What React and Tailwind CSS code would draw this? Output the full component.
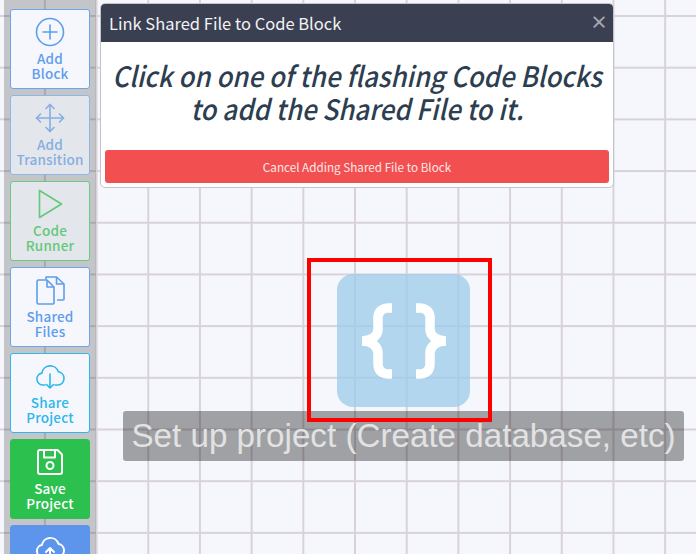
import React from 'react';

const IconPlus = () => (
  <svg width="30" height="30" viewBox="0 0 30 30" fill="none" stroke="currentColor" strokeWidth="1.6" strokeLinecap="round">
    <circle cx="15" cy="15" r="13.5" />
    <path d="M15 8v14M8 15h14" />
  </svg>
);

const IconMove = () => (
  <svg width="30" height="30" viewBox="0 0 30 30" fill="none" stroke="currentColor" strokeWidth="1.6" strokeLinecap="round" strokeLinejoin="round">
    <path d="M15 1.5v27M1.5 15h27" />
    <path d="M11 5.5l4-4 4 4M11 24.5l4 4 4-4M5.5 11l-4 4 4 4M24.5 11l4 4-4 4" />
  </svg>
);

const IconPlay = () => (
  <svg width="30" height="30" viewBox="0 0 30 30" fill="none" stroke="currentColor" strokeWidth="1.6" strokeLinejoin="round">
    <path d="M4.5 1.5v27L26.5 15z" />
  </svg>
);

const IconFiles = () => (
  <svg width="30" height="30" viewBox="0 0 30 30" fill="none" stroke="currentColor" strokeWidth="1.6" strokeLinejoin="round">
    <path d="M11 4.500V2h10.500L29 9v15a1 1 0 0 1-1 1h-6" />
    <path d="M21.500 2v7H29" />
    <path d="M3.500 5H12l7 7v16a1 1 0 0 1-1 1H3.500a1.500 1.500 0 0 1-1.500-1.500v-21A1.500 1.500 0 0 1 3.500 5z" />
    <path d="M12 5v7h7" />
  </svg>
);

const IconCloudDown = () => (
  <svg width="30" height="30" viewBox="0 0 30 30" fill="none" stroke="currentColor" strokeWidth="1.6" strokeLinecap="round" strokeLinejoin="round">
    <path d="M10 24H7.500a6 6 0 0 1-.6-11.900A8.500 8.500 0 0 1 23.400 10.800a6.700 6.700 0 0 1 .1 13.200H20" />
    <path d="M15 13v14M11.500 23.500L15 27l3.500-3.500" />
  </svg>
);

const IconSave = () => (
  <svg width="30" height="30" viewBox="0 0 30 30" fill="none" stroke="currentColor" strokeWidth="2" strokeLinejoin="round">
    <path d="M3 5a2 2 0 0 1 2-2h17.500L27 7.500V25a2 2 0 0 1-2 2H5a2 2 0 0 1-2-2z" />
    <path d="M9 3v7.500h11V3" />
    <circle cx="15" cy="18.500" r="3.500" />
  </svg>
);

const IconCloudUp = () => (
  <svg width="30" height="30" viewBox="0 0 30 30" fill="none" stroke="currentColor" strokeWidth="2" strokeLinecap="round" strokeLinejoin="round">
    <path d="M10 24H7.500a6 6 0 0 1-.6-11.900A8.500 8.500 0 0 1 23.400 10.800a6.700 6.700 0 0 1 .1 13.200H20" />
    <path d="M15 28V15M11 19l4-4 4 4" />
  </svg>
);

const tools = [
  { label: ['Add', 'Block'], icon: IconPlus, className: 'border-[#6aa5ee] bg-[#f5f7fd] text-[#5f9dec]' },
  { label: ['Add', 'Transition'], icon: IconMove, className: 'border-[#8fb6ea] bg-[#e3e6ea] text-[#86aee3]' },
  { label: ['Code', 'Runner'], icon: IconPlay, className: 'border-[#68cb80] bg-[#e3e6ea] text-[#62c97a]' },
  { label: ['Shared', 'Files'], icon: IconFiles, className: 'border-[#6aa5ee] bg-[#f5f7fd] text-[#5f9dec]' },
  { label: ['Share', 'Project'], icon: IconCloudDown, className: 'border-[#2db9ec] bg-[#f5f7fd] text-[#2db7ea]' },
  { label: ['Save', 'Project'], icon: IconSave, className: 'border-[#2cc14f] bg-[#2cc14f] text-white' },
  { label: ['Deploy', 'Project'], icon: IconCloudUp, className: 'border-[#5d94ec] bg-[#5d94ec] text-white' },
];

const Sidebar = () => (
  <div className="absolute left-1 top-0 bottom-0 flex w-[92px] flex-col gap-1.5 overflow-hidden bg-black/20 px-1.5 pt-[9px]">
    {tools.map((tool) => (
      <div key={tool.label.join(' ')} className={`flex h-20 w-20 shrink-0 flex-col items-center rounded-[3px] border pt-[7px] text-[13.500px] font-medium leading-[15px] tracking-[0.2px] ${tool.className}`}>
        <tool.icon />
        <span className="mt-1">{tool.label[0]}</span>
        <span>{tool.label[1]}</span>
      </div>
    ))}
  </div>
);

const LinkModal = () => (
  <div className="absolute left-[100px] top-[3px] flex h-[185px] w-[514px] flex-col overflow-hidden rounded-[5px] border border-[#c4c4c8] bg-white">
    <div className="flex h-[38px] shrink-0 items-center justify-between bg-[#3b3f52] pl-2 pr-[5px] text-[16.500px] text-[#f2f2f2]">
      <span>Link Shared File to Code Block</span>
      <span className="mb-1 text-[18px] font-bold leading-none text-[#a4a6ae]">×</span>
    </div>
    <div className="-mx-6 mt-[17px] scale-x-[0.925] whitespace-nowrap text-center text-[28px] font-medium italic leading-[33px] text-[#2c3e50]">
      Click on one of the flashing Code Blocks<br />to add the Shared File to it.
    </div>
    <div className="mx-1 mt-[25px] flex h-[33px] shrink-0 items-center justify-center rounded-[3px] bg-[#f25050] text-[11.700px] text-[#fde8e8]">
      Cancel Adding Shared File to Block
    </div>
  </div>
);

const App = () => {
  return (
    <div className="relative h-[554px] w-[696px] overflow-hidden bg-[#f5f7fc] bg-[linear-gradient(to_right,#d9d2da_1.5px,transparent_1.5px),linear-gradient(to_bottom,#d9d2da_1.5px,transparent_1.5px)] bg-[size:51.700px_51.700px] bg-[position:-7.800px_15px] font-['Noto_Sans_CJK_JP','Noto_Sans',sans-serif]">
      {/* code block on the canvas */}
      <div className="absolute left-[337px] top-[274px] flex h-[133px] w-[133px] items-center justify-center rounded-[16px] bg-[#9ccbeb]/75">
        <svg width="84" height="76" viewBox="0 0 84 76" fill="none" stroke="white" strokeWidth="9.500">
          <path d="M30 5h-3c-7 0-11 3.500-11 10v11c0 7-7 12-16 12 9 0 16 5 16 12v11c0 6.500 4 10 11 10h3" />
          <path d="M54 5h3c7 0 11 3.500 11 10v11c0 7 7 12 16 12-9 0-16 5-16 12v11c0 6.500-4 10-11 10h-3" />
        </svg>
      </div>
      <div className="absolute left-[123px] top-[411px] flex h-[50px] w-[561px] items-center justify-center rounded-[3px] bg-black/35 font-['Liberation_Sans',sans-serif] text-[33.200px] leading-none text-[#e2e2e2]">
        Set up project (Create database, etc)
      </div>
      <div className="absolute left-[307px] top-[258px] h-[164px] w-[185px] border-4 border-[#ff0000]" />
      <Sidebar />
      <LinkModal />
    </div>
  );
};

export default App;
